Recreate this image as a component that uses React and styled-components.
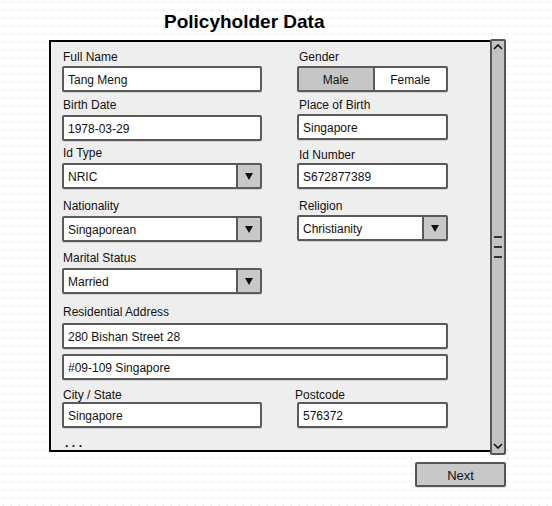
import React from "react";
import styled, { createGlobalStyle } from "styled-components";

const GlobalStyle = createGlobalStyle`
  html, body { margin: 0; padding: 0; }
  body { font-family: "Liberation Sans", Arial, sans-serif; color: #111; }
`;

const Page = styled.div`
  box-sizing: border-box;
  width: 552px;
  height: 506px;
  overflow: hidden;
  padding: 11px 0 0 49px;
  background-color: #fff;
  background-image: radial-gradient(circle at 3.5px 2px, #e2e2e2 0.7px, transparent 1.2px);
  background-size: 8px 8px;
`;

const Title = styled.h1`
  margin: 0 0 0 115px;
  font-size: 19px;
  line-height: 22px;
  font-weight: 700;
  color: #000;
`;

const Frame = styled.div`
  display: flex;
  align-items: flex-start;
  margin-top: 6px;
`;

const Panel = styled.div`
  box-sizing: border-box;
  width: 441px;
  height: 412px;
  margin-top: 1px;
  border: 2px solid #000;
  border-right: none;
  background: #eeeeee;
  padding: 8px 0 0 11px;
`;

const Scrollbar = styled.div`
  box-sizing: border-box;
  width: 16px;
  height: 416px;
  border: 2px solid #555;
  border-radius: 2px;
  background: #c3c3c3;
  display: flex;
  flex-direction: column;
  align-items: center;
  justify-content: space-between;
  padding: 3px 1px 4px 0;
`;

const Grip = styled.div`
  display: flex;
  flex-direction: column;
  gap: 8px;
`;

const GripLine = styled.div`
  width: 8px;
  height: 2px;
  background: #333;
`;

const Row = styled.div`
  display: grid;
  grid-template-columns: 200px 151px;
  column-gap: 35px;
  align-items: start;
  margin-top: ${(p) => p.$mt || 0}px;
`;

const Field = styled.div`
  display: flex;
  flex-direction: column;
  padding-top: ${(p) => p.$shift || 0}px;
  grid-column: ${(p) => (p.$full ? "1 / -1" : "auto")};
`;

const Label = styled.div`
  font-size: 12px;
  line-height: 14px;
  height: 14px;
  color: #111;
  margin-left: ${(p) => p.$indent ?? 1}px;
  margin-bottom: ${(p) => p.$gap ?? 3}px;
  white-space: nowrap;
`;

const Box = styled.div`
  box-sizing: border-box;
  height: 26px;
  border: 2px solid #5a5a5a;
  border-radius: 2px;
  background: #fff;
  box-shadow: 0 1px 0 rgba(0, 0, 0, 0.12);
  display: flex;
  align-items: stretch;
  font-size: 12px;
  color: #111;
  margin-top: ${(p) => p.$mt || 0}px;
`;

const BoxText = styled.div`
  flex: 1;
  display: flex;
  align-items: center;
  padding: 1px 0 0 4px;
  white-space: nowrap;
`;

const DropButton = styled.div`
  width: 22px;
  border-left: 2px solid #5a5a5a;
  background: #c8c8c8;
  display: flex;
  align-items: center;
  justify-content: center;
`;

const Triangle = styled.div`
  width: 0;
  height: 0;
  border-left: 4px solid transparent;
  border-right: 4px solid transparent;
  border-top: 7px solid #111;
`;

const Segmented = styled(Box)`
  display: grid;
  grid-template-columns: 1fr 1fr;
`;

const Segment = styled.div`
  display: flex;
  align-items: center;
  justify-content: center;
  padding-top: 1px;
  background: ${(p) => (p.$active ? "#c6c6c6" : "#fff")};
  border-left: ${(p) => (p.$divider ? "2px solid #5a5a5a" : "none")};
  font-size: 12px;
`;

const Ellipsis = styled.div`
  margin: 8px 0 0 3px;
  font-size: 12px;
  line-height: 14px;
  font-weight: 700;
  letter-spacing: 3.5px;
`;

const Footer = styled.div`
  width: 457px;
  display: flex;
  justify-content: flex-end;
  margin-top: 7px;
`;

const NextButton = styled.div`
  box-sizing: border-box;
  width: 91px;
  height: 25px;
  border: 2px solid #555;
  border-radius: 2px;
  background: #c8c8c8;
  display: flex;
  align-items: center;
  justify-content: center;
  padding-top: 1px;
  font-size: 13px;
  color: #111;
  box-shadow: 0 1px 0 rgba(0, 0, 0, 0.12);
`;

const Input = ({ value, mt }) => (
  <Box $mt={mt}>
    <BoxText>{value}</BoxText>
  </Box>
);

const Select = ({ value }) => (
  <Box>
    <BoxText>{value}</BoxText>
    <DropButton>
      <Triangle />
    </DropButton>
  </Box>
);

const Chevron = ({ up }) => (
  <svg width="10" height="6" viewBox="0 0 10 6">
    <path
      d={up ? "M1 5 L5 1 L9 5" : "M1 1 L5 5 L9 1"}
      fill="none"
      stroke="#111"
      strokeWidth="1.6"
    />
  </svg>
);

export default function App() {
  return (
    <>
      <GlobalStyle />
      <Page>
        <Title>Policyholder Data</Title>
        <Frame>
          <Panel>
            <Row>
              <Field>
                <Label $gap={2}>Full Name</Label>
                <Input value="Tang Meng" />
              </Field>
              <Field>
                <Label $indent={2} $gap={2}>Gender</Label>
                <Segmented>
                  <Segment $active>Male</Segment>
                  <Segment $divider>Female</Segment>
                </Segmented>
              </Field>
            </Row>
            <Row $mt={6}>
              <Field>
                <Label>Birth Date</Label>
                <Input value="1978-03-29" />
              </Field>
              <Field>
                <Label $indent={2} $gap={2}>Place of Birth</Label>
                <Input value="Singapore" />
              </Field>
            </Row>
            <Row $mt={5}>
              <Field>
                <Label>Id Type</Label>
                <Select value="NRIC" />
              </Field>
              <Field $shift={2}>
                <Label $indent={2} $gap={1}>Id Number</Label>
                <Input value="S672877389" />
              </Field>
            </Row>
            <Row $mt={10}>
              <Field>
                <Label>Nationality</Label>
                <Select value="Singaporean" />
              </Field>
              <Field>
                <Label $indent={2} $gap={2}>Religion</Label>
                <Select value="Christianity" />
              </Field>
            </Row>
            <Row $mt={9}>
              <Field>
                <Label>Marital Status</Label>
                <Select value="Married" />
              </Field>
            </Row>
            <Row $mt={11}>
              <Field $full>
                <Label $gap={4}>Residential Address</Label>
                <Input value="280 Bishan Street 28" />
                <Input value="#09-109 Singapore" mt={5} />
              </Field>
            </Row>
            <Row $mt={8}>
              <Field>
                <Label $gap={0}>City / State</Label>
                <Input value="Singapore" />
              </Field>
              <Field>
                <Label $indent={-2} $gap={0}>Postcode</Label>
                <Input value="576372" />
              </Field>
            </Row>
            <Ellipsis>...</Ellipsis>
          </Panel>
          <Scrollbar>
            <Chevron up />
            <Grip>
              <GripLine />
              <GripLine />
              <GripLine />
            </Grip>
            <Chevron />
          </Scrollbar>
        </Frame>
        <Footer>
          <NextButton>Next</NextButton>
        </Footer>
      </Page>
    </>
  );
}
